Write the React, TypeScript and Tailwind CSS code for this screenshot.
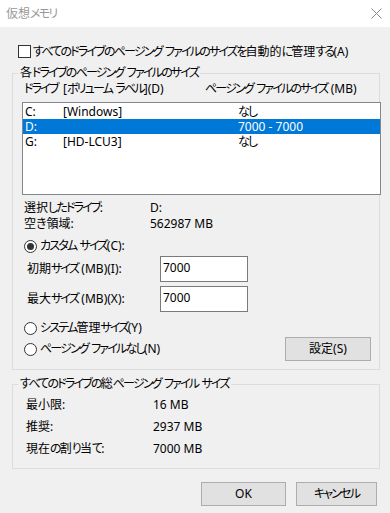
import React from "react"

const font = "font-['Noto_Sans','Noto_Sans_CJK_JP',sans-serif] [font-feature-settings:'palt']"

// Yu Gothic UI has narrow kana; tighten kana runs only so latin keeps its width
function J({ children }: { children: string }) {
  const parts = children.split(/([\u3040-\u30ff\u30fc]+)/)
  return (
    <>
      {parts.map((p, i) =>
        /[\u3040-\u30ff]/.test(p) ? (
          <span key={i} className="tracking-[-1.8px]">
            {p}
          </span>
        ) : (
          <React.Fragment key={i}>{p}</React.Fragment>
        )
      )}
    </>
  )
}

function Radio({ checked, label }: { checked?: boolean; label: string }) {
  return (
    <div className="flex h-[16px] items-center">
      <span className="flex h-[13px] w-[13px] items-center justify-center rounded-full border border-[#333333] bg-white">
        {checked && <span className="h-[7px] w-[7px] rounded-full bg-[#333333]" />}
      </span>
      <span className="ml-[3px] whitespace-nowrap leading-[16px]">
        <J>{label}</J>
      </span>
    </div>
  )
}

function GroupBox({ title, className, children }: { title: string; className: string; children: React.ReactNode }) {
  return (
    <div className={`relative border border-[#dcdcdc] ${className}`}>
      <span className="absolute left-[5px] top-[-9px] h-[16px] whitespace-nowrap bg-[#f0f0f0] px-[2px] leading-[16px]">
        <J>{title}</J>
      </span>
      {children}
    </div>
  )
}

function WinButton({ label, className }: { label: string; className: string }) {
  return (
    <button className={`flex h-[24px] items-center justify-center border border-[#adadad] bg-[#e1e1e1] leading-[16px] ${className}`}>
      <J>{label}</J>
    </button>
  )
}

const drives = [
  { drive: "C:", label: "[Windows]", size: "なし" },
  { drive: "D:", label: "", size: "7000 - 7000", selected: true },
  { drive: "G:", label: "[HD-LCU3]", size: "なし" },
]

const totals = [
  ["最小限:", "16 MB"],
  ["推奨:", "2937 MB"],
  ["現在の割り当て:", "7000 MB"],
]

export default function App() {
  return (
    <div className={`h-[513px] w-[390px] overflow-hidden whitespace-nowrap bg-[#f0f0f0] text-[12px] text-black ${font}`}>
      {/* Title bar */}
      <div className="flex h-[27px] items-center justify-between bg-white pl-[6px] pr-[7px]">
        <span className="leading-[16px] text-[#999999]">
          <J>仮想メモリ</J>
        </span>
        <svg width="11" height="11" viewBox="0 0 11 11" className="mr-[1px]">
          <path d="M0.5 0.5 L10.5 10.5 M10.5 0.5 L0.5 10.5" stroke="#8a8a8a" strokeWidth="1" fill="none" />
        </svg>
      </div>

      <div className="px-[12px]">
        {/* Auto manage checkbox */}
        <div className="mt-[18px] flex h-[13px] items-center pl-[6px]">
          <span className="h-[13px] w-[13px] border border-[#333333] bg-white" />
          <span className="ml-[2px] leading-[16px]">
            <J>すべてのドライブのページング ファイルのサイズを自動的に管理する(A)</J>
          </span>
        </div>

        {/* Per drive group */}
        <GroupBox title="各ドライブのページング ファイルのサイズ" className="mt-[15px] h-[297px] w-[368px]">
          <div className="mt-[8px] flex h-[14px] pl-[11px] leading-[14px]">
            <span className="w-[39px]">
              <J>ドライブ</J>
            </span>
            <span className="w-[142px]">
              <J>[ボリューム ラベル](D)</J>
            </span>
            <span>
              <J>ページング ファイルのサイズ (MB)</J>
            </span>
          </div>

          <div className="ml-[9px] mt-[6px] h-[93px] w-[359px] border border-[#828790] bg-white pt-[1px]">
            {drives.map((d) => (
              <div
                key={d.drive}
                className={`flex h-[15px] items-center pl-[2px] leading-[14px] ${d.selected ? "bg-[#0078d7] text-white" : ""}`}
              >
                <span className="w-[38px]">{d.drive}</span>
                <span className="w-[175px]">{d.label}</span>
                <span>
                  <J>{d.size}</J>
                </span>
              </div>
            ))}
          </div>

          <div className="mt-[5px] pl-[11px]">
            <div className="flex h-[16px] leading-[16px]">
              <span className="w-[126px]">
                <J>選択したドライブ:</J>
              </span>
              <span>D:</span>
            </div>
            <div className="flex h-[16px] leading-[16px]">
              <span className="w-[126px]">空き領域:</span>
              <span>562987 MB</span>
            </div>
          </div>

          <div className="mt-[6px] pl-[11px]">
            <Radio checked label="カスタム サイズ(C):" />
          </div>

          <div className="mt-[2px] flex h-[26px] items-center pl-[14px]">
            <span className="w-[133px] leading-[16px]">
              <J>初期サイズ (MB)(I):</J>
            </span>
            <div className="flex h-[26px] w-[88px] items-center border border-[#7a7a7a] bg-white pb-[2px] pl-[2px] leading-[16px]">7000</div>
          </div>
          <div className="mt-[4px] flex h-[26px] items-center pl-[14px]">
            <span className="w-[133px] leading-[16px]">
              <J>最大サイズ (MB)(X):</J>
            </span>
            <div className="flex h-[26px] w-[88px] items-center border border-[#7a7a7a] bg-white pb-[2px] pl-[2px] leading-[16px]">7000</div>
          </div>

          <div className="mt-[8px] pl-[11px]">
            <Radio label="システム管理サイズ(Y)" />
          </div>
          <div className="mt-[1px] flex h-[24px] items-center justify-between pl-[11px] pr-[8px]">
            <Radio label="ページング ファイルなし(N)" />
            <WinButton label="設定(S)" className="w-[86px]" />
          </div>
        </GroupBox>

        {/* Totals group */}
        <GroupBox title="すべてのドライブの総ページング ファイル サイズ" className="mt-[14px] h-[85px] w-[368px]">
          <div className="pl-[13px] pt-[9px]">
            {totals.map(([k, v]) => (
              <div key={k} className="flex h-[22px] items-center leading-[16px]">
                <span className="w-[127px]">
                  <J>{k}</J>
                </span>
                <span>{v}</span>
              </div>
            ))}
          </div>
        </GroupBox>

        {/* Dialog buttons */}
        <div className="mt-[13px] flex justify-end gap-[10px] pr-[1px]">
          <WinButton label="OK" className="w-[85px]" />
          <WinButton label="キャンセル" className="w-[81px]" />
        </div>
      </div>
    </div>
  )
}
